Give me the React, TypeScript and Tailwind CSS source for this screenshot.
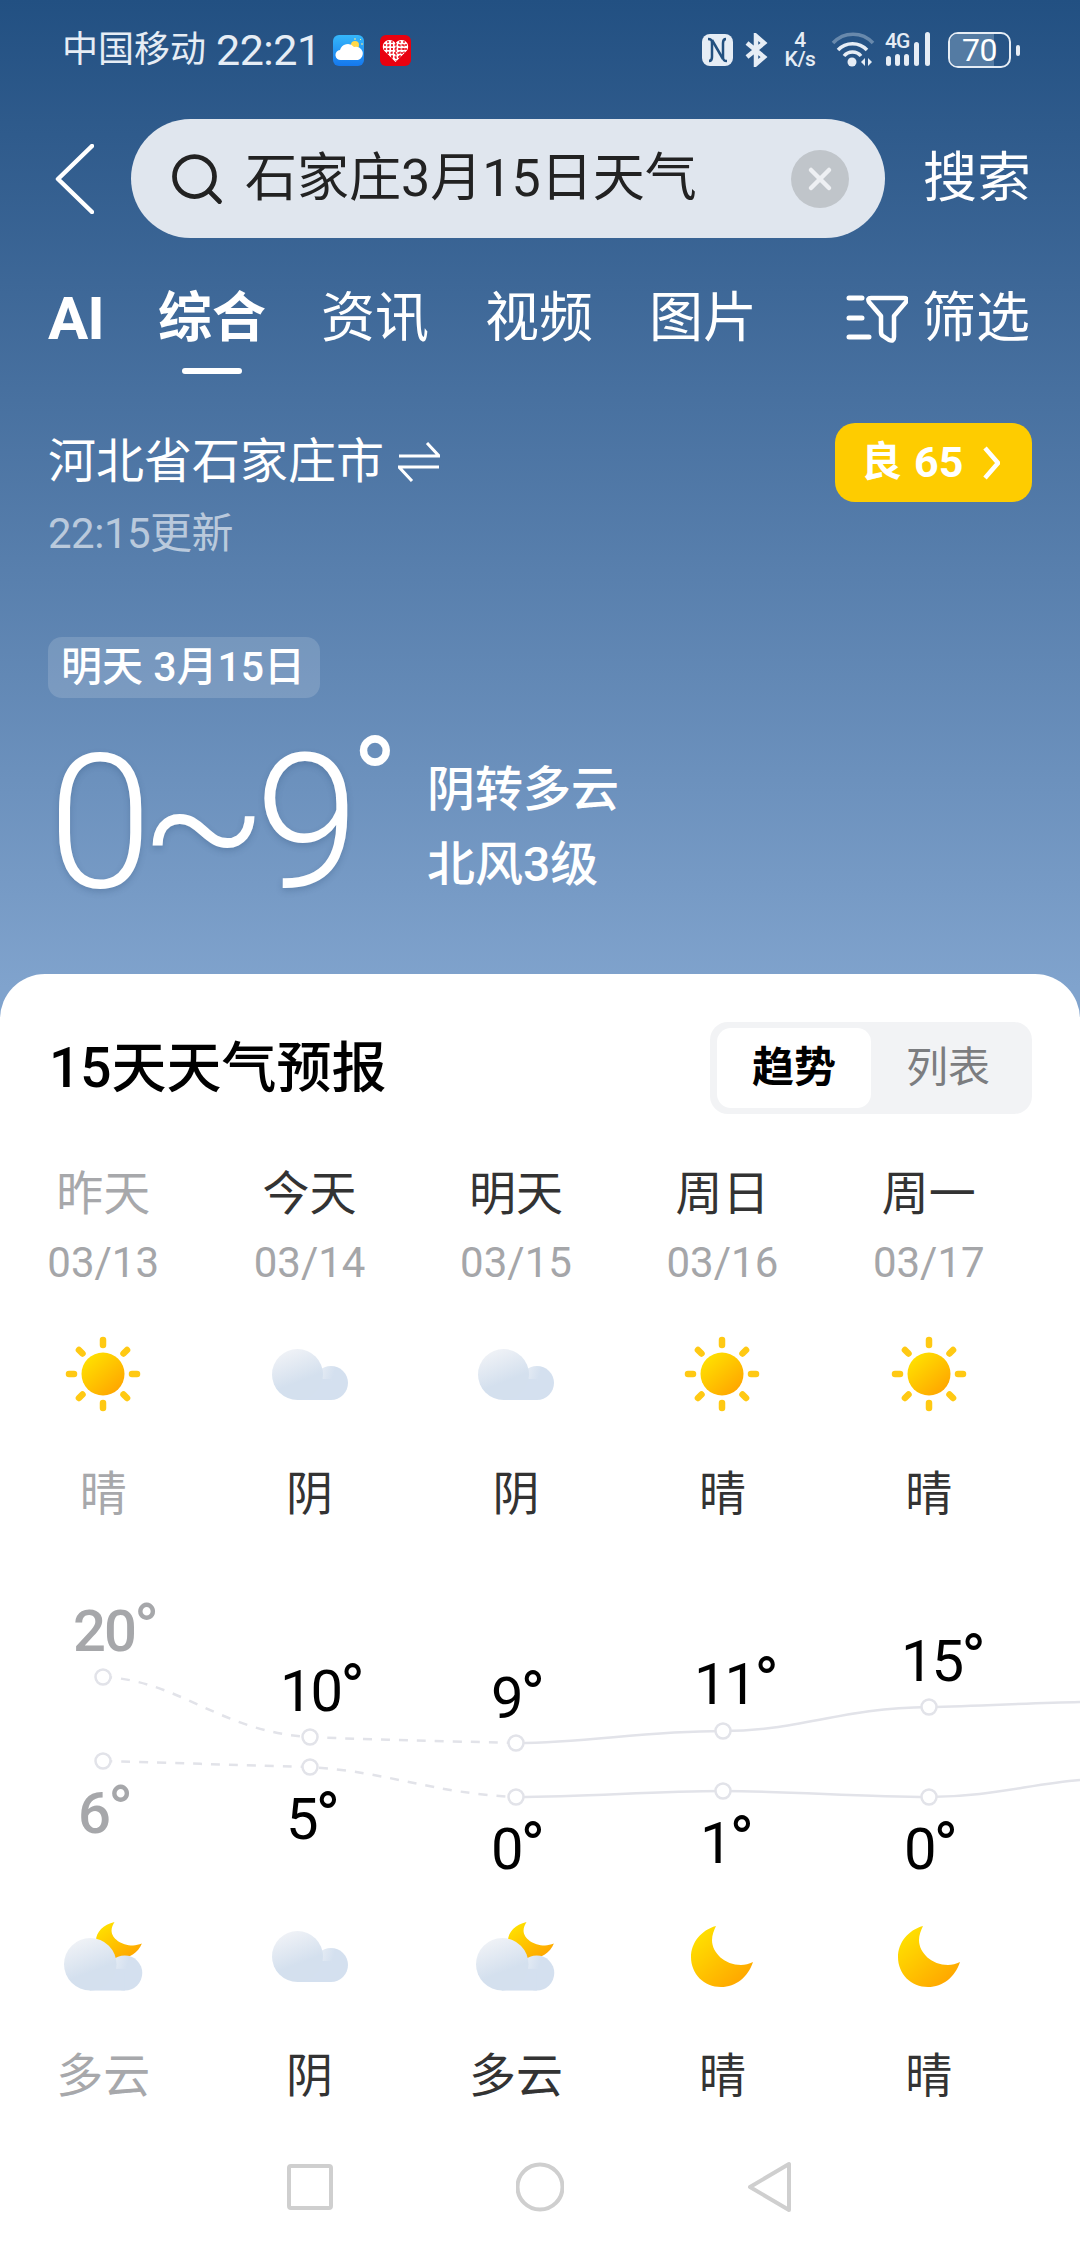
import { Search } from "lucide-react";

const days = [
  { name: "昨天", date: "03/13", day: "晴", icon: "sun", night: "多云", nightIcon: "mooncloud", past: true },
  { name: "今天", date: "03/14", day: "阴", icon: "cloud", night: "阴", nightIcon: "cloud" },
  { name: "明天", date: "03/15", day: "阴", icon: "cloud", night: "多云", nightIcon: "mooncloud" },
  { name: "周日", date: "03/16", day: "晴", icon: "sun", night: "晴", nightIcon: "moon" },
  { name: "周一", date: "03/17", day: "晴", icon: "sun", night: "晴", nightIcon: "moon" },
];

// chart coordinates are relative to the top of the chart block
const labels = [
  { t: "20", x: 76, y: 50, past: true },
  { t: "10", x: 283, y: 110 },
  { t: "9", x: 494, y: 117 },
  { t: "11", x: 697, y: 103 },
  { t: "15", x: 904, y: 80 },
  { t: "6", x: 81, y: 232, past: true },
  { t: "5", x: 289, y: 238 },
  { t: "0", x: 494, y: 268 },
  { t: "1", x: 703, y: 262 },
  { t: "0", x: 907, y: 268 },
];

const dots = [
  [103, 117], [310, 177], [516, 183], [723, 171], [929, 147],
  [103, 201], [310, 207], [516, 237], [723, 231], [929, 237],
];

function Gradients() {
  return (
    <svg width="0" height="0" className="absolute">
      <defs>
        <linearGradient id="sunGrad" x1="0.15" y1="0.1" x2="0.85" y2="0.9">
          <stop offset="0" stopColor="#ffe000" />
          <stop offset="1" stopColor="#ffa600" />
        </linearGradient>
        <linearGradient id="cloudBig" x1="0.25" y1="0" x2="0.5" y2="0.65">
          <stop offset="0" stopColor="#f1f3f7" />
          <stop offset="1" stopColor="#d4e0ee" />
        </linearGradient>
        <linearGradient id="cloudSmall" x1="0" y1="0" x2="1" y2="0.3">
          <stop offset="0" stopColor="#eef2f7" />
          <stop offset="0.6" stopColor="#d4e0ef" />
        </linearGradient>
      </defs>
    </svg>
  );
}

function SunIcon() {
  const rays = [0, 45, 90, 135, 180, 225, 270, 315];
  return (
    <svg width="78" height="78" viewBox="-39 -39 78 78">
      {rays.map((r) => (
        <line key={r} x1="0" y1="-29" x2="0" y2="-34" transform={`rotate(${r})`} stroke="#ffc913" strokeWidth="6.5" strokeLinecap="round" />
      ))}
      <circle r="21.5" fill="url(#sunGrad)" />
    </svg>
  );
}

function CloudShape() {
  return (
    <>
      <circle cx="59" cy="34" r="17" fill="url(#cloudSmall)" />
      <rect x="25" y="30" width="34" height="21" fill="#d4e0ef" />
      <circle cx="25.5" cy="25.5" r="25.5" fill="url(#cloudBig)" />
    </>
  );
}

function CloudIcon() {
  return (
    <svg width="76" height="51" viewBox="0 0 76 51">
      <CloudShape />
    </svg>
  );
}

const moonPath = "M25 0C10 4 0 17 0 31C0 48 13 61 30 61C45 61 57 51 62 36C58 38 54 39 50 39C34 39 21 27 21 14C21 9 23 4 25 0Z";

function MoonIcon() {
  return (
    <svg width="62" height="61" viewBox="0 0 62 61">
      <path d={moonPath} fill="url(#sunGrad)" />
    </svg>
  );
}

function MoonCloudIcon() {
  return (
    <svg width="79" height="69" viewBox="0 0 79 69">
      <path d={moonPath} fill="url(#sunGrad)" transform="translate(32 0) scale(0.74 0.6)" />
      <g transform="translate(0 16) scale(1.03)">
        <CloudShape />
      </g>
    </svg>
  );
}

function WeatherIcon({ name }: { name: string }) {
  if (name === "sun") return <SunIcon />;
  if (name === "cloud") return <CloudIcon />;
  if (name === "moon") return <MoonIcon />;
  return <MoonCloudIcon />;
}

function StatusBar() {
  return (
    <div className="h-[100px] pl-[62px] pr-[60px] flex items-center text-[#e6edf5]">
      <span className="text-[36px] leading-none">中国移动</span>
      <span className="ml-[10px] text-[43px] leading-none tracking-[-0.5px]">22:21</span>
      <svg className="ml-[12px]" width="31" height="31" viewBox="0 0 31 31">
        <defs>
          <linearGradient id="appBlue" x1="0" y1="0" x2="0" y2="1">
            <stop offset="0" stopColor="#35b7fb" />
            <stop offset="1" stopColor="#1578ee" />
          </linearGradient>
        </defs>
        <rect width="31" height="31" rx="6" fill="url(#appBlue)" />
        <circle cx="22" cy="10" r="4" fill="#ffd84a" />
        <path d="M22 3v2M28 9h2M27 5l1-1" stroke="#ffe98a" strokeWidth="1" />
        <path d="M8 25a5 5 0 0 1-1-10a8 8 0 0 1 14-3a6.500 6.500 0 0 1 4 13Z" fill="#fff" />
      </svg>
      <svg className="ml-[16px]" width="31" height="31" viewBox="0 0 31 31">
        <rect width="31" height="31" rx="6" fill="#e9010f" />
        <path d="M15.500 27L4 15.500C1 11 4 5 9.500 5C12 5 14.500 6.500 15.500 8.500C16.500 6.500 19 5 21.500 5C27 5 30 11 27 15.500Z" fill="#fff" />
        <path d="M4 10h23M4 14h23M7 18h17M11 22h9M8 6v16M12 6v18M16 8v18M20 6v18M24 6v12" stroke="#e9010f" strokeWidth="1.300" strokeDasharray="2 1.500" />
      </svg>
      <div className="ml-auto flex items-center h-[40px]">
        <svg width="31" height="32" viewBox="0 0 31 32">
          <rect width="31" height="32" rx="8" fill="#e6edf5" />
          <path d="M6 5c3 0 4 1 4 4v14c0 3-1 4-3 4M25 27c-3 0-4-1-4-4V9c0-3 1-4 3-4" stroke="#22507f" strokeWidth="2.500" fill="none" />
          <path d="M10 6l11 19" stroke="#22507f" strokeWidth="2.500" />
        </svg>
        <svg className="ml-[11px]" width="25" height="34" viewBox="0 0 25 34">
          <path d="M3 10l17 14l-8 7V3l8 7L3 24" fill="none" stroke="#e6edf5" strokeWidth="4.500" />
        </svg>
        <span className="ml-[14px] w-[34px] text-center text-[21px] leading-[19px] font-medium tracking-[-0.5px]">
          4<br />K/s
        </span>
        <svg className="ml-[14px]" width="44" height="36" viewBox="0 0 44 36">
          <path d="M2 11a27 27 0 0 1 40 0" fill="none" stroke="#e6edf5" strokeOpacity="0.35" strokeWidth="3.500" />
          <path d="M7 18a20 20 0 0 1 29 0M13 24a11 11 0 0 1 17 0" fill="none" stroke="#e6edf5" strokeWidth="3.500" />
          <circle cx="21" cy="30" r="4.500" fill="#e6edf5" />
          <path d="M34 26v8l-4-4ZM37 26v8l4-4Z" fill="#e6edf5" />
        </svg>
        <div className="ml-[10px] relative w-[50px] h-[36px]">
          <span className="absolute left-0 top-[-1px] text-[21px] leading-[20px] font-medium tracking-[-1px]">4G</span>
          <svg className="absolute inset-0" width="50" height="36" viewBox="0 0 50 36">
            <rect x="1" y="24" width="5" height="10" rx="2.500" fill="#e6edf5" />
            <rect x="10" y="22" width="5" height="12" rx="2.500" fill="#e6edf5" />
            <rect x="19" y="22" width="5" height="12" rx="2.500" fill="#e6edf5" />
            <rect x="29" y="10" width="5" height="24" rx="2.500" fill="#e6edf5" />
            <rect x="40" y="0" width="5" height="34" rx="2.500" fill="#e6edf5" />
          </svg>
        </div>
        <div className="ml-[13px] relative w-[63px] h-[36px] rounded-[10px] border-[2.5px] border-[#e6edf5] flex items-center justify-center">
          <div className="absolute left-0 top-0 bottom-0 w-[44px] rounded-l-[7px] bg-[#547ba3]" />
          <span className="relative text-[32px] leading-[31px] tracking-[-0.5px] text-white">70</span>
        </div>
        <div className="ml-[5px] w-[4px] h-[11px] rounded-full bg-[#e6edf5]" />
      </div>
    </div>
  );
}

function SearchRow() {
  return (
    <div className="mt-[19px] h-[119px] pl-[55px] flex items-center">
      <svg width="39" height="70" viewBox="0 0 39 70">
        <path d="M37 2L3 35L37 68" fill="none" stroke="#fff" strokeWidth="4.500" strokeLinecap="round" strokeLinejoin="round" />
      </svg>
      <div className="ml-[37px] w-[754px] h-[119px] rounded-full bg-[#e0e6ee] flex items-center pl-[36px] pr-[36px]">
        <Search size={60} strokeWidth={1.9} color="#222" className="shrink-0" />
        <span className="ml-[18px] text-[52px] leading-none text-[#222]">石家庄3月15日天气</span>
        <div className="ml-auto w-[58px] h-[58px] rounded-full bg-[#c0c5ca] flex items-center justify-center">
          <svg width="26" height="26" viewBox="0 0 26 26">
            <path d="M4 4L22 22M22 4L4 22" stroke="#eef0f3" strokeWidth="4.500" strokeLinecap="round" />
          </svg>
        </div>
      </div>
      <span className="ml-[38px] text-[54px] leading-none text-white">搜索</span>
    </div>
  );
}

function Tabs() {
  const tabs = ["资讯", "视频", "图片"];
  return (
    <>
      <div className="mt-[41px] h-[80px] pl-[48px] pr-[50px] flex items-center text-white">
        <span className="w-[110px] text-[60px] leading-none font-bold tracking-[-1px]">AI</span>
        <span className="w-[108px] text-[54px] leading-none font-bold">综合</span>
        <div className="ml-[55px] flex gap-[56px]">
          {tabs.map((t) => (
            <span key={t} className="w-[108px] text-[54px] leading-none">{t}</span>
          ))}
        </div>
        <svg className="ml-auto" width="62" height="50" viewBox="0 0 62 50">
          <path d="M3 4h13M3 24h13M3 43h20" stroke="#fff" strokeWidth="5" strokeLinecap="round" />
          <path d="M25 4H58Q62 4 60 8L48 22V43Q48 48 43 46L37 42Q35 41 35 38V22L23 8Q21 4 25 4Z" fill="none" stroke="#fff" strokeWidth="4.500" strokeLinejoin="round" />
        </svg>
        <span className="ml-[14px] text-[54px] leading-none">筛选</span>
      </div>
      <div className="mt-[9px] ml-[182px] w-[60px] h-[6px] rounded-full bg-white" />
    </>
  );
}

function LocationRow() {
  return (
    <div className="mt-[49px] pl-[48px] pr-[48px] flex justify-between items-start">
      <div className="pt-[11px]">
        <div className="h-[56px] flex items-center text-white">
          <span className="text-[48px] leading-none">河北省石家庄市</span>
          <svg className="ml-[14px]" width="42" height="40" viewBox="0 0 42 40">
            <path d="M1 14H41L29 1M41 25H1L14 39" fill="none" stroke="#fff" strokeWidth="3" />
          </svg>
        </div>
        <div className="mt-[22px] h-[44px] flex items-center text-[42px] leading-none text-white/60 tracking-[-0.5px]">22:15更新</div>
      </div>
      <div className="w-[197px] h-[79px] rounded-[20px] bg-[#fecc00] flex items-center pl-[26px] text-white font-bold">
        <span className="text-[41px] leading-none">良</span>
        <span className="ml-[12px] text-[43px] leading-none font-bold">65</span>
        <svg className="ml-[20px]" width="17" height="34" viewBox="0 0 17 34">
          <path d="M2 2L15 17L2 32" fill="none" stroke="#fff" strokeWidth="4.500" />
        </svg>
      </div>
    </div>
  );
}

function TodayBlock() {
  return (
    <div className="pl-[48px]">
      <div className="mt-[81px] w-[272px] h-[61px] rounded-[14px] bg-white/15 flex items-center pl-[13px] text-[41px] leading-none font-medium text-white">
        明天 3月15日
      </div>
      <div className="mt-[40px] h-[236px] flex items-start text-white">
        <div className="relative w-[379px] h-[170px]">
          <span className="block h-[170px] text-[188px] leading-[170px] font-light tracking-[-13px] [text-shadow:0_3px_6px_rgba(40,70,110,0.25)]">
            0~9
          </span>
          <span className="absolute left-[304px] top-[-16px] text-[122px] leading-[122px]">°</span>
        </div>
        <div className="font-medium text-[48px] leading-none">
          <div className="h-[73px] pt-[28px]">阴转多云</div>
          <div className="mt-[30px]">北风3级</div>
        </div>
      </div>
    </div>
  );
}

function Chart() {
  return (
    <div className="relative mt-[37px] h-[340px] w-[1080px]">
      <svg className="absolute inset-0" width="1080" height="340" viewBox="0 0 1080 340">
        <g fill="none" stroke="#e2e3e9" strokeWidth="2.500">
          <path d="M103 117C180 120 220 172 310 177C380 180 440 181 516 183" strokeDasharray="9 9" />
          <path d="M103 201C180 203 230 205 310 207C390 212 430 233 516 237" strokeDasharray="9 9" />
          <path d="M516 183C590 183 640 171 723 171C800 171 840 148 929 147C980 146 1030 143 1080 142" />
          <path d="M516 237C590 237 650 231 723 231C790 231 860 237 929 237C990 237 1030 224 1080 220" />
        </g>
        {dots.map(([x, y]) => (
          <circle key={`${x}-${y}`} cx={x} cy={y} r="7.500" fill="#fff" stroke="#e2e3e9" strokeWidth="2.500" />
        ))}
      </svg>
      {labels.map((l) => (
        <span
          key={l.t + l.x}
          className={`absolute flex items-start text-[58px] leading-[58px] tracking-[-2px] ${l.past ? "text-[#a6a7aa] font-medium" : "text-black"}`}
          style={{ left: l.x - 3, top: l.y - 8 }}
        >
          {l.t}
          <span className="text-[66px] leading-[58px] ml-[-1px] mt-[-2px] tracking-normal">°</span>
        </span>
      ))}
    </div>
  );
}

export default function App() {
  return (
    <div className="relative w-[1080px] h-[2244px] overflow-hidden flex flex-col bg-gradient-to-b from-[#225082] from-0% to-[#80a3cd] to-[44%] font-['Roboto','Noto_Sans_CJK_SC',sans-serif]">
      <Gradients />
      <StatusBar />
      <SearchRow />
      <Tabs />
      <LocationRow />
      <TodayBlock />

      <div className="flex-1 rounded-t-[45px] bg-white">
        <div className="mt-[48px] h-[92px] pl-[49px] pr-[48px] flex items-center justify-between">
          <span className="text-[55px] leading-none font-medium text-black">15天天气预报</span>
          <div className="w-[322px] h-[92px] rounded-[18px] bg-[#f2f3f5] pl-[7px] pt-[6px] flex">
            <div className="w-[154px] h-[80px] rounded-[14px] bg-white flex items-center justify-center text-[42px] leading-none font-bold text-black">趋势</div>
            <div className="w-[154px] h-[80px] flex items-center justify-center text-[42px] leading-none text-[#7c7d80]">列表</div>
          </div>
        </div>

        <div className="mt-[49px] w-[1032px] grid grid-cols-5">
          {days.map((d) => (
            <div key={d.date} className="flex flex-col items-center">
              <div className={`h-[60px] flex items-center text-[47px] leading-none ${d.past ? "text-[#a7a8ab]" : "text-[#333]"}`}>{d.name}</div>
              <div className="mt-[15px] h-[50px] flex items-center text-[42px] leading-none text-[#a5a6a9]">{d.date}</div>
              <div className="mt-[41px] h-[90px] flex items-center justify-center">
                <WeatherIcon name={d.icon} />
              </div>
              <div className={`mt-[44px] h-[60px] flex items-center text-[47px] leading-none ${d.past ? "text-[#a7a8ab]" : "text-[#333]"}`}>{d.day}</div>
            </div>
          ))}
        </div>

        <Chart />

        <div className="mt-[16px] w-[1032px] grid grid-cols-5">
          {days.map((d) => (
            <div key={d.date} className="flex flex-col items-center">
              <div className="h-[80px] flex items-center justify-center">
                <WeatherIcon name={d.nightIcon} />
              </div>
              <div className={`mt-[49px] h-[60px] flex items-center text-[47px] leading-none ${d.past ? "text-[#a7a8ab]" : "text-[#333]"}`}>{d.night}</div>
            </div>
          ))}
        </div>

        <div className="mt-[50px] h-[64px] pl-[286px] flex items-center gap-[182px]">
          <svg width="48" height="48" viewBox="0 0 48 48">
            <rect x="3" y="3" width="42" height="42" rx="2" fill="none" stroke="#cfcfcf" strokeWidth="4" />
          </svg>
          <svg width="48" height="50" viewBox="0 0 48 50">
            <circle cx="24" cy="25" r="22.500" fill="none" stroke="#cfcfcf" strokeWidth="4" />
          </svg>
          <svg width="48" height="52" viewBox="0 0 48 52">
            <path d="M43 3V49L4 26Z" fill="none" stroke="#cfcfcf" strokeWidth="4" strokeLinejoin="round" />
          </svg>
        </div>
      </div>
    </div>
  );
}
